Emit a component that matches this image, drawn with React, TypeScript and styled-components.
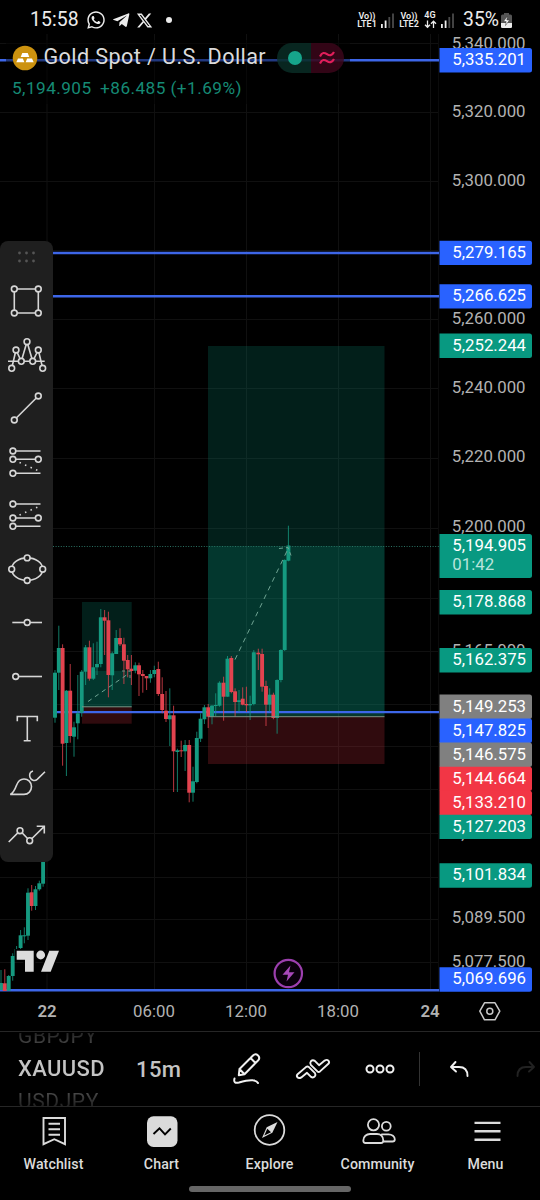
import React from "react";
import styled, { createGlobalStyle } from "styled-components";
import { FaTelegramPlane, FaWhatsapp } from "react-icons/fa";
import { FaXTwitter } from "react-icons/fa6";

const GlobalStyle = createGlobalStyle`
  * { box-sizing: border-box; }
  body { margin: 0; background: #000; font-family: Roboto, "Liberation Sans", sans-serif; }
  svg { display: block; flex: none; }
`;

const UP = "#159a80";
const DOWN = "#e2434f";
const TEAL = "#089981";
const BLUE = "#2962ff";
const RED = "#f23645";
const GRAY = "#808080";

/* ---------- shell ---------- */

const Screen = styled.div`
  width: 540px;
  height: 1200px;
  display: flex;
  flex-direction: column;
  background: #000;
  color: #dbdbdb;
  overflow: hidden;
`;

const StatusBar = styled.header`
  height: 32px;
  flex: none;
  display: flex;
  align-items: center;
  justify-content: space-between;
  padding: 8px 28px 0 30px;
  color: #ececec;
`;

const StatusGroup = styled.div<{ $gap: number }>`
  display: flex;
  align-items: center;
  gap: ${(p) => p.$gap}px;
  height: 24px;
`;

const Clock = styled.span`
  font-size: 19.4px;
  line-height: 24px;
  letter-spacing: 0.1px;
  margin-right: 2px;
`;

const Dot = styled.i`
  width: 6px;
  height: 6px;
  border-radius: 50%;
  background: #ececec;
  margin-left: 8px;
`;

const Carrier = styled.span<{ $width: number }>`
  display: flex;
  flex-direction: column;
  align-items: center;
  width: ${(p) => p.$width}px;
  font-size: 9px;
  line-height: 8.5px;
  font-weight: 600;
  white-space: nowrap;
`;

const Percent = styled.span`
  font-size: 19.4px;
  line-height: 24px;
  margin-left: 4px;
  margin-right: -2px;
`;

const ChartPane = styled.main`
  position: relative;
  height: 999px;
  flex: none;
`;

/* ---------- legend over the chart ---------- */

const Legend = styled.section`
  position: absolute;
  left: 6px;
  top: 8px;
  width: 344px;
  height: 64px;
  padding: 2px 6px 0;
  background: rgba(0, 0, 0, 0.45);
`;

const LegendRow = styled.div`
  display: flex;
  align-items: center;
  height: 32px;
`;

const SymbolTitle = styled.h1`
  margin: -3px 0 0 5.5px;
  font-size: 21.6px;
  line-height: 30px;
  font-weight: 400;
  letter-spacing: 0.4px;
  white-space: nowrap;
  color: #dbdbdb;
`;

const MarketPill = styled.div`
  display: flex;
  margin-left: 11px;
  width: 67px;
  height: 30px;
  border-radius: 15px;
  overflow: hidden;
`;

const PillHalf = styled.span<{ $bg: string }>`
  flex: 1;
  display: flex;
  align-items: center;
  justify-content: center;
  background: ${(p) => p.$bg};
`;

const OpenDot = styled.i`
  width: 14px;
  height: 14px;
  border-radius: 50%;
  background: #16a58b;
  margin-left: 3px;
`;

const Quote = styled.div`
  display: flex;
  gap: 8.5px;
  font-size: 17.2px;
  line-height: 29px;
  letter-spacing: 0.45px;
  color: #168a75;
  white-space: nowrap;
`;

/* ---------- drawing toolbar ---------- */

const DrawingBar = styled.aside`
  position: absolute;
  left: 0;
  top: 209px;
  width: 53px;
  height: 621px;
  border-radius: 8px;
  background: #1f1f1f;
  display: flex;
  flex-direction: column;
  overflow: hidden;
`;

const Grip = styled.div`
  height: 33.5px;
  flex: none;
  padding: 10px 0 0 18px;
`;

const Tool = styled.button`
  height: 53.5px;
  flex: none;
  padding: 0 0 0 7px;
  border: 0;
  background: none;
  display: flex;
  align-items: center;
`;

/* ---------- bottom controls ---------- */

const Controls = styled.section`
  height: 75px;
  flex: none;
  display: flex;
  align-items: center;
  border-top: 1.5px solid #262626;
  overflow: hidden;
`;

const Wheel = styled.div`
  width: 118px;
  height: 73px;
  flex: none;
  overflow: hidden;
  padding-left: 18px;
  display: flex;
  flex-direction: column;
  justify-content: center;
`;

const WheelItem = styled.span<{ $side?: "top" | "bottom" }>`
  height: 32.5px;
  line-height: 32.5px;
  flex: none;
  font-weight: ${(p) => (p.$side ? 400 : 500)};
  font-size: ${(p) => (p.$side ? 21 : 22)}px;
  letter-spacing: ${(p) => (p.$side ? 0.6 : 0.35)}px;
  color: transparent;
  background: ${(p) =>
    p.$side === "top"
      ? "linear-gradient(#111 20%, #555 90%)"
      : p.$side === "bottom"
      ? "linear-gradient(#555 10%, #111 80%)"
      : "#c4c4c4"};
  background-clip: text;
`;

const Interval = styled.span`
  width: 96px;
  flex: none;
  padding-left: 18px;
  font-size: 22px;
  font-weight: 500;
  letter-spacing: 0.4px;
  color: #c4c4c4;
`;

const ControlIcon = styled.button<{ $w: number; $dim?: boolean }>`
  width: ${(p) => p.$w}px;
  height: 60px;
  flex: none;
  padding: 0;
  border: 0;
  background: none;
  display: flex;
  align-items: center;
  justify-content: center;
  color: ${(p) => (p.$dim ? "#222" : "#f0f0f0")};
`;

const Divider = styled.i`
  width: 1px;
  height: 34px;
  flex: none;
  margin-left: 6px;
  background: #333;
`;

const TabBar = styled.nav`
  height: 80px;
  flex: none;
  display: grid;
  grid-template-columns: repeat(5, 108px);
  border-top: 1.5px solid #262626;
`;

const Tab = styled.a`
  display: flex;
  flex-direction: column;
  align-items: center;
  padding: 5px 1px 0 0;
  font-size: 14.2px;
  line-height: 18px;
  font-weight: 500;
  letter-spacing: 0.08px;
  color: #dbdbdb;
  svg { margin-bottom: 5px; }
`;

const HomeIndicator = styled.div`
  width: 162px;
  height: 6px;
  margin: 0 0 0 189px;
  border-radius: 3px;
  background: #666;
`;

/* ---------- chart data ---------- */

// x, body top, body bottom, wick top, wick bottom, rising
type Candle = [number, number, number, number, number, 0 | 1];

const candles: Candle[] = [
  [1, 983, 990, 970, 990, 1],
  [4.8, 983.3, 991, 969.3, 991, 0],
  [8.7, 976, 990.7, 975, 991, 1],
  [12.7, 956, 976, 953.3, 980.7, 1],
  [16.6, 949, 956, 946, 960, 1],
  [20.6, 935.3, 948, 930, 950, 1],
  [24.3, 935.3, 936, 927.3, 943.3, 1],
  [28, 892.7, 935.7, 888.3, 940, 1],
  [31.7, 892.3, 906, 885, 910.7, 0],
  [35.5, 889.3, 906, 886, 910, 1],
  [39.3, 883.3, 889.3, 880.7, 890.7, 1],
  [43.1, 850, 883.7, 845, 886.7, 1],
  [55, 672.7, 717.7, 670, 722.7, 1],
  [58.8, 648, 672.7, 625.7, 690, 1],
  [62.6, 648, 743.7, 644.3, 765.7, 0],
  [66.4, 690.7, 743, 690, 776, 1],
  [70.2, 690.7, 736, 664, 742.7, 0],
  [74, 727.3, 736.7, 721.7, 756.7, 1],
  [77.8, 713.3, 723.3, 675, 739.3, 1],
  [81.7, 671.7, 712.7, 670, 716.7, 1],
  [85.6, 647.3, 671.7, 645, 685, 1],
  [89.4, 647.3, 678.7, 640.7, 680.7, 0],
  [93.3, 667.3, 678.7, 643.3, 680, 1],
  [97, 664, 667.3, 641.7, 675, 1],
  [100.8, 617.3, 664, 609, 667.3, 1],
  [104.6, 617.3, 620.7, 610, 655, 0],
  [108.4, 620.3, 675, 611.7, 697.3, 0],
  [112.2, 653.3, 675.3, 651.7, 690, 1],
  [116.2, 638, 654, 630, 654, 1],
  [120, 638, 644.3, 628.3, 646, 0],
  [123.9, 644.3, 660.7, 637.7, 684, 0],
  [127.7, 660, 669.3, 655, 677.3, 0],
  [131.4, 668.7, 671, 655, 685, 0],
  [135.3, 665.3, 670.7, 662.3, 673.3, 1],
  [139, 665.3, 674.3, 662.7, 696, 0],
  [142.8, 674, 676, 670, 692.7, 0],
  [146.6, 676, 678.3, 676, 690, 0],
  [150.4, 674, 678.3, 670, 682.7, 1],
  [154.3, 670, 674, 665.7, 677.3, 1],
  [158.3, 669, 694, 661.7, 696, 0],
  [162.2, 694, 710, 677.3, 713.3, 0],
  [166, 710.7, 719, 691, 722, 0],
  [169.8, 715.3, 719.3, 688.3, 746, 1],
  [173.6, 715.3, 751.3, 705.7, 792, 0],
  [177.4, 750.3, 752, 748.7, 792, 1],
  [181.2, 750.3, 751.2, 740.7, 757, 0],
  [185.1, 745, 751.3, 740, 771, 1],
  [189.2, 745, 792.7, 740, 802.3, 0],
  [193, 781.3, 792.7, 766.7, 801.7, 1],
  [196.8, 738, 782, 731.7, 783.3, 1],
  [200.6, 718.7, 738.7, 713.3, 742, 1],
  [204.4, 707.3, 719.3, 705, 724, 1],
  [208.2, 707.3, 716.7, 704, 728, 0],
  [212, 705.7, 716.7, 705, 724.3, 1],
  [215.7, 705, 705.9, 693.3, 716, 1],
  [219.5, 682.7, 705.7, 681.3, 706.7, 1],
  [223.6, 682.7, 696.7, 676.7, 720.7, 0],
  [227.5, 658.7, 696.7, 656, 696.7, 1],
  [231.3, 658, 692, 656, 693.3, 0],
  [235.1, 691.3, 702, 688.3, 716.7, 0],
  [239, 700.3, 702, 690, 711.7, 1],
  [242.7, 698.7, 704.7, 687.3, 705.3, 0],
  [246.4, 704, 705.3, 686.7, 712, 0],
  [250.1, 704, 705.3, 695.7, 720, 1],
  [253.8, 652.3, 704, 650, 705.3, 1],
  [258.3, 652.7, 654.3, 648.7, 670, 0],
  [262.1, 654, 686.7, 648.7, 691.7, 0],
  [266, 686, 704.7, 680.7, 726, 0],
  [269.7, 694.7, 704.7, 688.3, 711.7, 1],
  [273.4, 694.7, 718, 692.7, 719.3, 0],
  [277.1, 680, 718, 679.3, 733.7, 1],
  [280.9, 650, 680, 649.3, 682.3, 1],
  [284.7, 560, 650, 559.3, 651, 1],
  [288.4, 545.5, 560.7, 525.7, 561.3, 1],
];

const gridX = [47, 154.5, 246.5, 338.5, 430.5];
const gridY = [43.5, 112.5, 181.5, 250.5, 319.5, 388.5, 458.5, 528.5, 598.5, 651.5, 704.5, 746.5, 789.5, 833.5, 877.5, 919.5, 962.5];
const levels = [60.3, 253, 296.3, 712.1, 990.3];

const axisTicks: [number, string][] = [
  [43, "5,340.000"], [111, "5,320.000"], [180, "5,300.000"], [318, "5,260.000"],
  [387, "5,240.000"], [456.5, "5,220.000"], [526, "5,200.000"], [650, "5,165.000"],
  [833.5, "5,113.500"], [917.5, "5,089.500"], [961, "5,077.500"],
];

const priceTags: [number, string, string][] = [
  [48, "5,335.201", BLUE], [240.7, "5,279.165", BLUE], [284.2, "5,266.625", BLUE],
  [333.5, "5,252.244", TEAL], [590, "5,178.868", TEAL], [648, "5,162.375", TEAL],
  [694.5, "5,149.253", GRAY], [718.5, "5,147.825", BLUE], [742.6, "5,146.575", GRAY],
  [766.7, "5,144.664", RED], [790.7, "5,133.210", RED], [814.7, "5,127.203", TEAL],
  [863.3, "5,101.834", TEAL], [967.3, "5,069.696", BLUE],
];

const timeTicks: [number, string, boolean][] = [
  [47, "22", true], [154, "06:00", false], [246, "12:00", false], [338, "18:00", false], [430, "24", true],
];

const AxisText = styled.text<{ $bold?: boolean }>`
  font-family: Roboto, sans-serif;
  font-size: 16.8px;
  font-weight: ${(p) => (p.$bold ? 600 : 400)};
`;

const tagShape = (y: number, h: number) =>
  `M439.5 ${y}h90a2.5 2.5 0 0 1 2.5 2.5v${h - 5}a2.5 2.5 0 0 1 -2.5 2.5h-90z`;

function PriceChart() {
  return (
    <svg width="540" height="999" viewBox="0 32 540 999">
      <g stroke="#101010" strokeWidth="1">
        {gridX.map((x) => <path key={x} d={`M${x} 34V990`} />)}
        {gridY.map((y) => <path key={y} d={`M0 ${y}H438`} />)}
        <path d="M438.5 34V990" stroke="#0b0b0b" />
      </g>

      <rect x="208" y="346" width="176.5" height="370.5" fill={TEAL} fillOpacity=".2" />
      <rect x="208" y="546" width="176.5" height="170.5" fill={TEAL} fillOpacity=".2" />
      <rect x="208" y="716.5" width="176.5" height="47.5" fill={RED} fillOpacity=".2" />
      <rect x="82" y="602" width="49.7" height="105" fill={TEAL} fillOpacity=".2" />
      <rect x="82" y="671" width="49.7" height="36" fill={TEAL} fillOpacity=".2" />
      <rect x="82" y="707" width="49.7" height="16.7" fill={RED} fillOpacity=".2" />

      <g stroke="#3d66e8" strokeWidth="2.4">
        {levels.map((y) => <path key={y} d={`M0 ${y}H439`} />)}
      </g>

      {candles.map(([x, top, bottom, high, low, up]) => (
        <g key={x} fill={up ? UP : DOWN}>
          <rect x={x - 0.5} y={high} width="1" height={low - high} opacity=".8" />
          <rect x={x - 1.95} y={top} width="3.9" height={Math.max(bottom - top, 1)} />
        </g>
      ))}

      <path d="M82 706.8h49.7M208 716.7h176.5" stroke="#7b9486" strokeWidth="1" />
      <path d="M235 659.6L287 551" stroke="#6fa493" strokeWidth="1" strokeDasharray="5 4.6" fill="none" />
      <path d="M279 548.5l9 -1l3 8" stroke="#6fa493" strokeWidth="1" strokeDasharray="4 3" fill="none" />
      <path d="M88 701.5L128 674" stroke="#6fa493" strokeWidth="1" strokeDasharray="4.4 4" fill="none" />
      <path d="M122 671h8v8" stroke="#6b8f84" strokeWidth="1" strokeDasharray="3 3" fill="none" />
      <path d="M53 546.5H439" stroke="#2b7263" strokeWidth="1" strokeDasharray="1 1.6" />

      <g fill="#dbdbdb" stroke="#000" strokeWidth="3.5" paintOrder="stroke">
        <path d="M16.7 950.7H33.7V971.7H25V959.7H16.7z" />
        <circle cx="40.7" cy="955" r="4.4" />
        <path d="M49.3 950.7H59L50.7 971.7H41z" />
      </g>

      <circle cx="288.3" cy="973.5" r="13.7" fill="#0a000c" stroke="#9c3fae" strokeWidth="2.2" />
      <path d="M290.5 965.5L282.5 974.8H288L286.5 981.5L294.5 972.2H289z" fill="#a848ba" />

      <g fill="#b2b2b2">
        {axisTicks.map(([y, label]) => <AxisText key={label} x="451.8" y={y + 5.5}>{label}</AxisText>)}
      </g>
      {priceTags.map(([y, label, color]) => (
        <g key={label}>
          <path d={tagShape(y, 24.4)} fill={color} />
          <AxisText x="452.3" y={y + 17} fill="#fff">{label}</AxisText>
        </g>
      ))}
      <path d={tagShape(534, 44)} fill={TEAL} />
      <AxisText x="452.3" y="550.8" fill="#fff">5,194.905</AxisText>
      <AxisText x="452.3" y="570.2" fill="#b9e4dc">01:42</AxisText>

      <g fill="#b2b2b2" textAnchor="middle">
        {timeTicks.map(([x, label, bold]) => (
          <AxisText key={label} x={x} y="1017.3" $bold={bold}>{label}</AxisText>
        ))}
      </g>
      <path d="M484.5 1002.8H495L499.8 1011.2L495 1019.8H484.5L479.8 1011.2z" fill="none" stroke="#c8c8c8" strokeWidth="1.5" strokeLinejoin="round" />
      <circle cx="489.8" cy="1011.2" r="3" fill="none" stroke="#c8c8c8" strokeWidth="1.5" />
    </svg>
  );
}

/* ---------- toolbar icons ---------- */

const Node = ({ x, y }: { x: number; y: number }) => <circle cx={x} cy={y} r="2.9" fill="#1f1f1f" />;

const tools: { name: string; art: React.ReactNode }[] = [
  { name: "Rectangle", art: <><path d="M7.3 8H31.3V32H7.3z" /><Node x={7.3} y={8} /><Node x={31.3} y={8} /><Node x={7.3} y={32} /><Node x={31.3} y={32} /></> },
  { name: "Pattern", art: <><path d="M1 26.3H37.7M4.7 33.3L9 15L14.3 26.3L20 6.7L25.7 26.3L31.3 15L35.7 33.3" /><Node x={4.7} y={33.3} /><Node x={9} y={15} /><Node x={14.3} y={26.3} /><Node x={20} y={6.7} /><Node x={25.7} y={26.3} /><Node x={31.3} y={15} /><Node x={35.7} y={33.3} /></> },
  { name: "Trend line", art: <><path d="M7.3 32L31.3 8" /><Node x={7.3} y={32} /><Node x={31.3} y={8} /></> },
  { name: "Long position", art: <><path d="M6 9H33.5M6 17.3H31M6 31.3H33.5" /><path d="M12.5 20.5L32 29" strokeDasharray="1.5 4.5" /><Node x={5.9} y={9} /><Node x={5.9} y={17.3} /><Node x={31.3} y={17.3} /><Node x={5.9} y={31.3} /></> },
  { name: "Short position", art: <><path d="M6 9H33.5M6 23H31M6 31.3H33.5" /><path d="M12.5 20L32 11.5" strokeDasharray="1.5 4.5" /><Node x={5.9} y={9} /><Node x={5.9} y={23} /><Node x={31.3} y={23} /><Node x={5.9} y={31.3} /></> },
  { name: "Ellipse", art: <><ellipse cx="20.2" cy="20.2" rx="15.5" ry="11.3" /><Node x={20.2} y={8.9} /><Node x={4.7} y={20.2} /><Node x={35.7} y={20.2} /><Node x={20.2} y={31.5} /></> },
  { name: "Horizontal line", art: <><path d="M5.3 20.5H35" /><Node x={20.2} y={20.5} /></> },
  { name: "Horizontal ray", art: <><path d="M8.7 20.5H35" /><Node x={8.7} y={20.5} /></> },
  { name: "Text", art: <path d="M10.3 12.3V7.5H30.3V12.3M20.3 7.5V31.7M16.7 31.7H23.7" /> },
  { name: "Brush", art: <><path d="M3.3 31.4C6.8 29.5 8 26.5 9.3 22.8C11 18 14 16 17 16C21.2 16 24.5 19.3 24.5 23.6C24.5 28 21.4 31.4 17 31.4z" /><path d="M26 8C23 8.8 22 11.5 23 14.2C24 17 27.5 18.8 30.2 16.3L38 8.7" /></> },
  { name: "Path", art: <><path d="M1.7 26L13 14.7L22.7 24.7L37 10.6M29.7 10.3H37.3V17.5" /><Node x={13} y={14.7} /><Node x={22.7} y={24.7} /></> },
];

function DrawingTools() {
  return (
    <DrawingBar>
      <Grip>
        <svg width="20" height="14" fill="#555">
          {[1.5, 8.5, 15.5].map((x) => [2, 10].map((y) => <circle key={`${x}-${y}`} cx={x} cy={y} r="1.4" />))}
        </svg>
      </Grip>
      {tools.map((t) => (
        <Tool key={t.name} aria-label={t.name}>
          <svg width="40" height="40" fill="none" stroke="#d6d6d6" strokeWidth="1.6">{t.art}</svg>
        </Tool>
      ))}
    </DrawingBar>
  );
}

const SignalBars = ({ on }: { on: number }) => (
  <svg width="14" height="15">
    {[0, 1, 2, 3].map((i) => (
      <rect key={i} x={i * 3.7} y={11 - i * 3.5} width="1.8" height={4 + i * 3.5} fill={i < on ? "#ececec" : "#4a4a4a"} />
    ))}
  </svg>
);

export default function App() {
  return (
    <Screen>
      <GlobalStyle />
      <StatusBar>
        <StatusGroup $gap={5.5}>
          <Clock>15:58</Clock>
          <FaWhatsapp size={20} />
          <FaTelegramPlane size={18.5} />
          <FaXTwitter size={17} />
          <Dot />
        </StatusGroup>
        <StatusGroup $gap={4}>
          <Carrier $width={20}><span>Vo))</span><span>LTE1</span></Carrier>
          <SignalBars on={2} />
          <Carrier $width={20}><span>Vo))</span><span>LTE2</span></Carrier>
          <Carrier $width={14}>
            <span>4G</span>
            <svg width="13" height="9" fill="none" stroke="currentColor" strokeWidth="1.3">
              <path d="M3.5 .5V7M1 4.8L3.5 7.3L6 4.8M9.5 8V1.5M7 3.7L9.5 1.2L12 3.7" />
            </svg>
          </Carrier>
          <SignalBars on={2} />
          <Percent>35%</Percent>
          <svg width="11" height="15">
            <path d="M3 0H8V1.5H9.5Q11 1.5 11 3V13.5Q11 15 9.5 15H1.5Q0 15 0 13.5V3Q0 1.5 1.5 1.5H3z" fill="#555" />
            <path d="M0 10H11V13.5Q11 15 9.5 15H1.5Q0 15 0 13.5z" fill="#ececec" />
            <path d="M6.5 3L2.5 8.6H5.2L4.5 12.5L8.5 7H5.8z" fill="#fff" stroke="#333" strokeWidth=".5" />
          </svg>
        </StatusGroup>
      </StatusBar>

      <ChartPane>
        <PriceChart />
        <Legend>
          <LegendRow>
            <svg width="26" height="26" viewBox="0 0 26 26">
              <circle cx="13" cy="13" r="12.3" fill="#cc920f" />
              <path d="M10.3 8H15.7L17.3 12H8.7zM6 13.5H10.8L12.4 17.3H4.3zM15.2 13.5H20L21.7 17.3H13.6z" fill="#fff" />
            </svg>
            <SymbolTitle>Gold Spot / U.S. Dollar</SymbolTitle>
            <MarketPill>
              <PillHalf $bg="rgba(10,48,40,.8)"><OpenDot /></PillHalf>
              <PillHalf $bg="rgba(62,6,28,.8)">
                <svg width="16" height="14" fill="none" stroke="#e01e5a" strokeWidth="2.2">
                  <path d="M1 5.5C3 1 5.5 1.5 8 3.2S13 4.8 15 1M1 12.5C3 8 5.5 8.5 8 10.2S13 11.8 15 8" />
                </svg>
              </PillHalf>
            </MarketPill>
          </LegendRow>
          <Quote><span>5,194.905</span><span>+86.485 (+1.69%)</span></Quote>
        </Legend>
        <DrawingTools />
      </ChartPane>

      <Controls>
        <Wheel>
          <WheelItem $side="top">GBPJPY</WheelItem>
          <WheelItem>XAUUSD</WheelItem>
          <WheelItem $side="bottom">USDJPY</WheelItem>
        </Wheel>
        <Interval>15m</Interval>
        <ControlIcon $w={66}>
          <svg width="32" height="34" fill="none" stroke="currentColor" strokeWidth="2" strokeLinecap="round" strokeLinejoin="round">
            <path d="M7.8 23.2L8.5 17L22 3.5C23.5 2 25.5 2 27 3.4C28.4 4.8 28.4 7 27 8.5L13.5 22.3zM8.5 17L13.5 22.3M19.5 6L24.5 11" />
            <path d="M3.5 26.5C2.5 30 4 31.5 8 30.5C13 29 18 27.5 22 28.3C25 28.8 26.5 30 27 31" />
          </svg>
        </ControlIcon>
        <ControlIcon $w={66}>
          <svg width="34" height="22" viewBox="0 0 34 22" fill="none" stroke="currentColor" strokeWidth="1.9" strokeLinejoin="round" overflow="visible">
            <path d="M1.6 16.2L10.2 8.9Q11.5 8 12.7 8.9L19 15.2Q20 16.8 18.8 18.3Q17.2 20.2 15 18.9L11 14.8L5.3 19.4Q3 20.8 1.4 19.3Q0.2 17.5 1.6 16.2z" />
            <path d="M32.4 5.8L24 13.4Q22.7 14.4 21.4 13.4L14.8 6.8Q13.6 5 14.9 3.2Q16.7 1.5 18.8 2.9L23 7.2L28.7 2.6Q30.9 1.2 32.4 2.6Q33.8 4.3 32.4 5.8z" />
          </svg>
        </ControlIcon>
        <ControlIcon $w={67}>
          <svg width="30" height="12" fill="none" stroke="currentColor" strokeWidth="2">
            <circle cx="5" cy="6" r="3.5" /><circle cx="15" cy="6" r="3.5" /><circle cx="25" cy="6" r="3.5" />
          </svg>
        </ControlIcon>
        <Divider />
        <ControlIcon $w={77}>
          <svg width="20" height="18" fill="none" stroke="currentColor" strokeWidth="1.9" strokeLinecap="round" strokeLinejoin="round">
            <path d="M6.5 2L2 7L7 11.5M2 7H10C15 7 18.5 10 18.5 16" />
          </svg>
        </ControlIcon>
        <ControlIcon $w={57} $dim>
          <svg width="20" height="18" fill="none" stroke="currentColor" strokeWidth="1.9" strokeLinecap="round" strokeLinejoin="round">
            <path d="M13.5 2L18 7L13 11.5M18 7H10C5 7 1.5 10 1.5 16" />
          </svg>
        </ControlIcon>
      </Controls>

      <TabBar>
        <Tab>
          <svg width="38" height="38" fill="none" stroke="currentColor" strokeWidth="1.9">
            <path d="M8.5 6H30V32.2L19.3 27.2L8.5 32.2zM13.5 11.7H25M13.5 17.2H25M13.5 22.7H25" />
          </svg>
          Watchlist
        </Tab>
        <Tab>
          <svg width="38" height="38">
            <rect x="4" y="4.3" width="30.5" height="30.7" rx="6.5" fill="#dbdbdb" />
            <path d="M10.5 22L16.5 16.3L22 22.3L27.8 16.5" fill="none" stroke="#000" strokeWidth="1.9" />
          </svg>
          Chart
        </Tab>
        <Tab>
          <svg width="38" height="38">
            <circle cx="18.5" cy="18" r="14.8" fill="none" stroke="currentColor" strokeWidth="1.8" />
            <path d="M26.5 10L21.3 20.7L11 26L15.7 15.3z" fill="currentColor" />
            <path d="M16.3 16.7L20 20.2L13.3 23.6z" fill="#000" />
          </svg>
          Explore
        </Tab>
        <Tab>
          <svg width="38" height="38" fill="none" stroke="currentColor" strokeWidth="1.8">
            <circle cx="14.5" cy="12.8" r="5.6" /><circle cx="27.3" cy="14.3" r="4.4" />
            <path d="M4.3 28.5C4.3 24.5 7.5 22 11 22H18C21.5 22 24.3 24.5 24.3 28.5Q24.3 31 22 31H6.5Q4.3 31 4.3 28.5zM22.3 22.3H29.5C33 22.3 35.8 24.5 35.8 27.2Q35.8 29.5 33.5 29.5H24.5" />
          </svg>
          Community
        </Tab>
        <Tab>
          <svg width="38" height="38" stroke="currentColor" strokeWidth="2.4">
            <path d="M7.5 10.9H33.5M7.5 19.3H33.5M7.5 27.7H33.5" />
          </svg>
          Menu
        </Tab>
      </TabBar>
      <HomeIndicator />
    </Screen>
  );
}
